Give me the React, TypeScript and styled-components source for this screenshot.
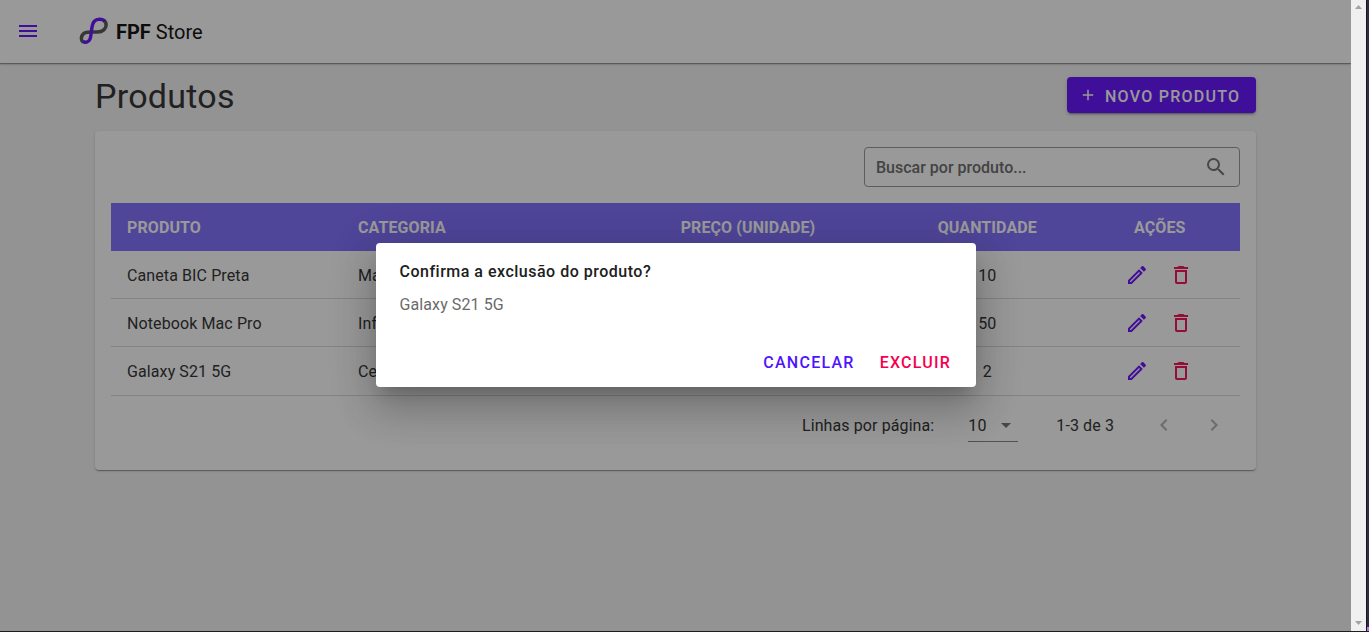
import React from 'react';
import styled, { createGlobalStyle } from 'styled-components';

const Global = createGlobalStyle`
  * { box-sizing: border-box; }
  html, body { margin: 0; height: 100%; overflow: hidden; }
  body { font-family: Roboto, "Liberation Sans", sans-serif; font-size: 16px; color: rgba(0,0,0,.87); -webkit-font-smoothing: antialiased; }
`;
const Window = styled.div`
  display: flex; width: 1369px; height: 632px; overflow: hidden;
  border-bottom: 1px solid #1e1e20; background: #f0f0f0;
`;
const Page = styled.div`
  position: relative; width: 1351px; height: 631px; background: #f5f5f5; overflow: hidden;
`;
const Scrollbar = styled.div`
  width: 15px; display: flex; flex-direction: column; justify-content: space-between;
  align-items: center; padding: 5px 0 6px; background: #f0f0f0;
`;
const Edge = styled.div`
  width: 3px; border-left: 1px solid #17171f; background: linear-gradient(#2d2d44 627px, #c070f0 627px);
`;
const TopBar = styled.header`
  height: 63px; padding: 0 18px 2px; display: flex; align-items: center; background: #fff;
  box-shadow: 0 1px 1px rgba(0,0,0,.3), 0 1px 3px rgba(0,0,0,.2);
`;
const Brand = styled.div`
  display: flex; align-items: center; margin-left: 39px; font-size: 20px; color: #161616;
  svg { margin-right: 7px; }
`;
const BrandName = styled.span`
  padding-top: 2px; line-height: 24px;
  b { font-weight: 700; }
`;
const Content = styled.main`
  width: 1161px; margin: 0 0 0 95px; padding-top: 14px;
`;
const Heading = styled.div`
  height: 36px; display: flex; align-items: center; justify-content: space-between;
`;
const Title = styled.h1`
  margin: 2px 0 0; font-size: 34px; line-height: 40px; font-weight: 400; letter-spacing: .25px; color: #373737;
`;
const NewButton = styled.button`
  width: 189px; height: 36px; padding: 0 0 0 12px; display: flex; align-items: center; border: 0; border-radius: 4px;
  background: #6b19ff; color: #fff; font: 500 16px/36px Roboto, sans-serif; letter-spacing: 1.25px; white-space: nowrap;
  box-shadow: 0 3px 1px -2px rgba(0,0,0,.2), 0 2px 2px rgba(0,0,0,.14), 0 1px 5px rgba(0,0,0,.12);
  svg { margin-right: 8px; }
  span { padding-top: 3px; }
`;
const Card = styled.section`
  height: 339px; margin-top: 18px; padding: 16px; background: #fff; border-radius: 4px;
  box-shadow: 0 2px 1px -1px rgba(0,0,0,.2), 0 1px 1px rgba(0,0,0,.14), 0 1px 3px rgba(0,0,0,.12);
`;
const Search = styled.div`
  width: 376px; height: 40px; margin-left: auto; padding: 0 11px; display: flex; align-items: center; justify-content: space-between;
  border: 1px solid #9b9b9b; border-radius: 4px; color: #707070; font-weight: 500;
`;
const Table = styled.div`margin-top: 16px;`;
const Row = styled.div<{ $head?: boolean; $last?: boolean }>`
  display: grid; grid-template-columns: 231px 259px 294px 184.6px 160.4px; align-items: center;
  height: ${p => (p.$last ? 49 : 48)}px;
  background: ${p => (p.$head ? '#8473ff' : 'transparent')};
  color: ${p => (p.$head ? '#fff' : '#373737')};
  font-weight: ${p => (p.$head ? 700 : 400)};
  border-bottom: ${p => (p.$head ? 'none' : '1px solid #dadada')};
`;
const Cell = styled.div<{ $center?: boolean }>`
  padding: 1px 16px 0; white-space: nowrap; letter-spacing: .1px;
  text-align: ${p => (p.$center ? 'center' : 'left')};
`;
const Actions = styled.div`display: flex; justify-content: center; gap: 20px; padding-right: 1.2px;`;
const Pager = styled.div`
  height: 58px; display: flex; align-items: center; justify-content: flex-end; letter-spacing: .1px; color: #373737;
`;
const PageSize = styled.div`
  width: 50px; height: 33px; margin: 0 38px 0 34px; display: flex; align-items: center; justify-content: space-between;
  border-bottom: 1px solid #888;
  span { padding-top: 1px; }
`;
const PageButtons = styled.div`display: flex; gap: 26px; margin: 0 14px 0 38px;`;
const Scrim = styled.div`
  position: absolute; inset: 0; padding: 243px 0 0 376px; background: rgba(0,0,0,.4);
`;
const Dialog = styled.div`
  width: 600px; height: 144px; padding: 16px 24.8px 6px 23.5px; background: #fff; border-radius: 4px;
  display: flex; flex-direction: column;
  box-shadow: 0 11px 15px -7px rgba(0,0,0,.2), 0 24px 38px 3px rgba(0,0,0,.14), 0 9px 46px 8px rgba(0,0,0,.12);
`;
const DialogTitle = styled.h2`margin: 0; font-size: 16px; line-height: 26px; font-weight: 500; letter-spacing: .5px; color: #202020;`;
const DialogText = styled.p`margin: 7px 0 0; line-height: 26px; letter-spacing: .1px; color: #6b6b6b;`;
const DialogActions = styled.div`display: flex; justify-content: flex-end; gap: 25px; margin-top: auto;`;
const TextButton = styled.button<{ $color: string }>`
  padding: 0; border: 0; background: none; color: ${p => p.$color};
  font: 500 16px/36px Roboto, sans-serif; letter-spacing: 1.25px;
`;

const paths = {
  menu: 'M3 18h18v-2H3v2zm0-5h18v-2H3v2zm0-7v2h18V6H3z',
  plus: 'M19 13h-6v6h-2v-6H5v-2h6V5h2v6h6v2z',
  search: 'M15.5 14h-.79l-.28-.27A6.471 6.471 0 0 0 16 9.5 6.5 6.5 0 1 0 9.5 16c1.61 0 3.09-.59 4.23-1.57l.27.28v.79l5 4.99L20.49 19l-4.99-5zm-6 0C7.01 14 5 11.99 5 9.5S7.01 5 9.5 5 14 7.01 14 9.5 11.99 14 9.5 14z',
  edit: 'M14.06 9.02l.92.92L5.92 19H5v-.92l9.06-9.06M17.66 3c-.25 0-.51.1-.7.29l-1.83 1.83 3.75 3.75 1.83-1.83a.996.996 0 0 0 0-1.41l-2.34-2.34c-.2-.2-.45-.29-.71-.29zm-3.6 3.19L3 17.25V21h3.75L17.81 9.94l-3.75-3.75z',
  trash: 'M6 19c0 1.1.9 2 2 2h8c1.1 0 2-.9 2-2V7H6v12zM8 9h8v10H8V9zm7.5-5l-1-1h-5l-1 1H5v2h14V4z',
  down: 'M7 10l5 5 5-5z',
  left: 'M15.41 7.41L14 6l-6 6 6 6 1.41-1.41L10.83 12z',
  right: 'M10 6L8.59 7.41 13.17 12l-4.58 4.59L10 18l6-6z',
};
const Icon = ({ name, color, size = 24 }: { name: keyof typeof paths; color: string; size?: number }) => (
  <svg width={size} height={size} viewBox="0 0 24 24" fill={color}><path d={paths[name]} /></svg>
);
const MenuButton = styled.div`display: flex; margin-left: -2px;`;

const Logo = () => (
  <svg width="30" height="30" viewBox="79 16 30 30" fill="none">
    <path d="M83 42C80.6 40.2 80.8 36 83.6 33.6C85.4 31.9 88.5 32 92 32H97.5C103 32 106 28.5 106.1 25.2C106.2 23 105.5 21.7 104 20.8" stroke="#5c5c5c" strokeWidth="3.5" />
    <path d="M82.8 41.6C85 42.8 88.6 42.6 90 39.2C91.7 34.8 91 27.8 93.2 23C95.2 18.8 101 18.3 104.8 21" stroke="#6b19ff" strokeWidth="3.4" />
  </svg>
);

const products = [
  { name: 'Caneta BIC Preta', category: 'Ma', price: '', quantity: 10 },
  { name: 'Notebook Mac Pro', category: 'Inf', price: '', quantity: 50 },
  { name: 'Galaxy S21 5G', category: 'Ce', price: '', quantity: 2 },
];

export default function App() {
  return (
    <Window>
      <Global />
      <Page>
        <TopBar>
          <MenuButton><Icon name="menu" color="#6b19ff" /></MenuButton>
          <Brand><Logo /><BrandName><b>FPF</b> Store</BrandName></Brand>
        </TopBar>
        <Content>
          <Heading>
            <Title>Produtos</Title>
            <NewButton><Icon name="plus" color="#fff" size={18} /><span>NOVO PRODUTO</span></NewButton>
          </Heading>
          <Card>
            <Search>Buscar por produto...<Icon name="search" color="#777" /></Search>
            <Table>
              <Row $head>
                <Cell>PRODUTO</Cell><Cell>CATEGORIA</Cell><Cell $center>PREÇO (UNIDADE)</Cell>
                <Cell $center>QUANTIDADE</Cell><Cell $center>AÇÕES</Cell>
              </Row>
              {products.map((p, i) => (
                <Row key={p.name} $last={i === products.length - 1}>
                  <Cell>{p.name}</Cell><Cell>{p.category}</Cell><Cell $center>{p.price}</Cell><Cell $center>{p.quantity}</Cell>
                  <Actions><Icon name="edit" color="#6b19ff" /><Icon name="trash" color="#f5175a" /></Actions>
                </Row>
              ))}
            </Table>
            <Pager>
              Linhas por página:
              <PageSize><span>10</span><Icon name="down" color="#777" /></PageSize>
              1-3 de 3
              <PageButtons><Icon name="left" color="#b5b5b5" /><Icon name="right" color="#b5b5b5" /></PageButtons>
            </Pager>
          </Card>
        </Content>
        <Scrim>
          <Dialog>
            <DialogTitle>Confirma a exclusão do produto?</DialogTitle>
            <DialogText>Galaxy S21 5G</DialogText>
            <DialogActions>
              <TextButton $color="#4f14ff">CANCELAR</TextButton>
              <TextButton $color="#f50050">EXCLUIR</TextButton>
            </DialogActions>
          </Dialog>
        </Scrim>
      </Page>
      <Scrollbar>
        <svg width="7" height="4" viewBox="0 0 7 4" fill="#a3a3a3"><path d="M3.5 0L7 4H0z" /></svg>
        <svg width="7" height="4" viewBox="0 0 7 4" fill="#a3a3a3"><path d="M0 0h7L3.5 4z" /></svg>
      </Scrollbar>
      <Edge />
    </Window>
  );
}
